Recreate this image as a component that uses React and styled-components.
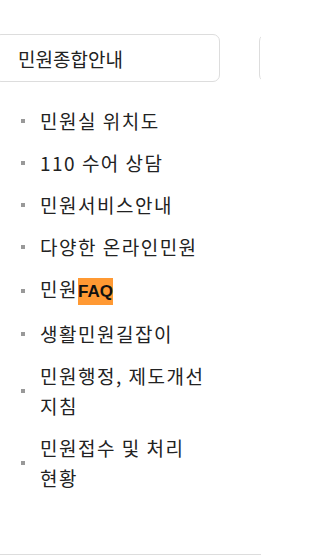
import React from "react";
import styled, { createGlobalStyle } from "styled-components";

const Global = createGlobalStyle`
  html, body { margin: 0; padding: 0; background: #fff; }
  body { font-family: "Noto Sans CJK KR", "Noto Sans", sans-serif; color: #222; overflow: hidden; }
`;

const Page = styled.div`
  width: 261px;
  height: 554px;
  border-bottom: 1px solid #dddddd;
  overflow: hidden;
`;

const TabStrip = styled.div`
  display: flex;
  gap: 39px;
  padding-top: 34px;
  margin-left: -6px;
  white-space: nowrap;
`;

const Tab = styled.div`
  flex: none;
  box-sizing: border-box;
  width: ${(p) => p.$w}px;
  height: 48px;
  border: 1px solid #dddddd;
  border-radius: 7px;
  padding-left: 23px;
  display: flex;
  align-items: center;
  font-size: 19px;
  color: #222;
`;

const List = styled.ul`
  list-style: none;
  margin: 18px 0 0;
  padding: 0 0 0 21px;
  width: 194px;
`;

const Item = styled.li`
  display: flex;
  align-items: center;
  gap: 15px;
  padding: 6px 0;
  font-size: 19px;
  letter-spacing: 1.5px;
  line-height: 30px;
  color: #222;
`;

const Bullet = styled.span`
  flex: none;
  width: 4px;
  height: 4px;
  background: #999999;
`;

const Label = styled.span`
  flex: 1;
  word-break: keep-all;
`;

const Mark = styled.mark`
  background: #ff9933;
  color: #111;
  font-weight: 700;
  font-size: 17px;
  letter-spacing: 0;
  padding: 4px 0;
  font-family: "Liberation Sans", Arial, sans-serif;
`;

const items = [
  "민원실 위치도",
  "110 수어 상담",
  "민원서비스안내",
  "다양한 온라인민원",
  "FAQ",
  "생활민원길잡이",
  "민원행정, 제도개선 지침",
  "민원접수 및 처리 현황",
];

export default function App() {
  return (
    <>
      <Global />
      <Page>
        <TabStrip>
          <Tab $w={226}>민원종합안내</Tab>
          <Tab $w={226} />
        </TabStrip>
        <List>
          {items.map((t) => (
            <Item key={t}>
              <Bullet />
              <Label>
                {t === "FAQ" ? (
                  <>
                    민원<Mark>FAQ</Mark>
                  </>
                ) : (
                  t
                )}
              </Label>
            </Item>
          ))}
        </List>
      </Page>
    </>
  );
}
